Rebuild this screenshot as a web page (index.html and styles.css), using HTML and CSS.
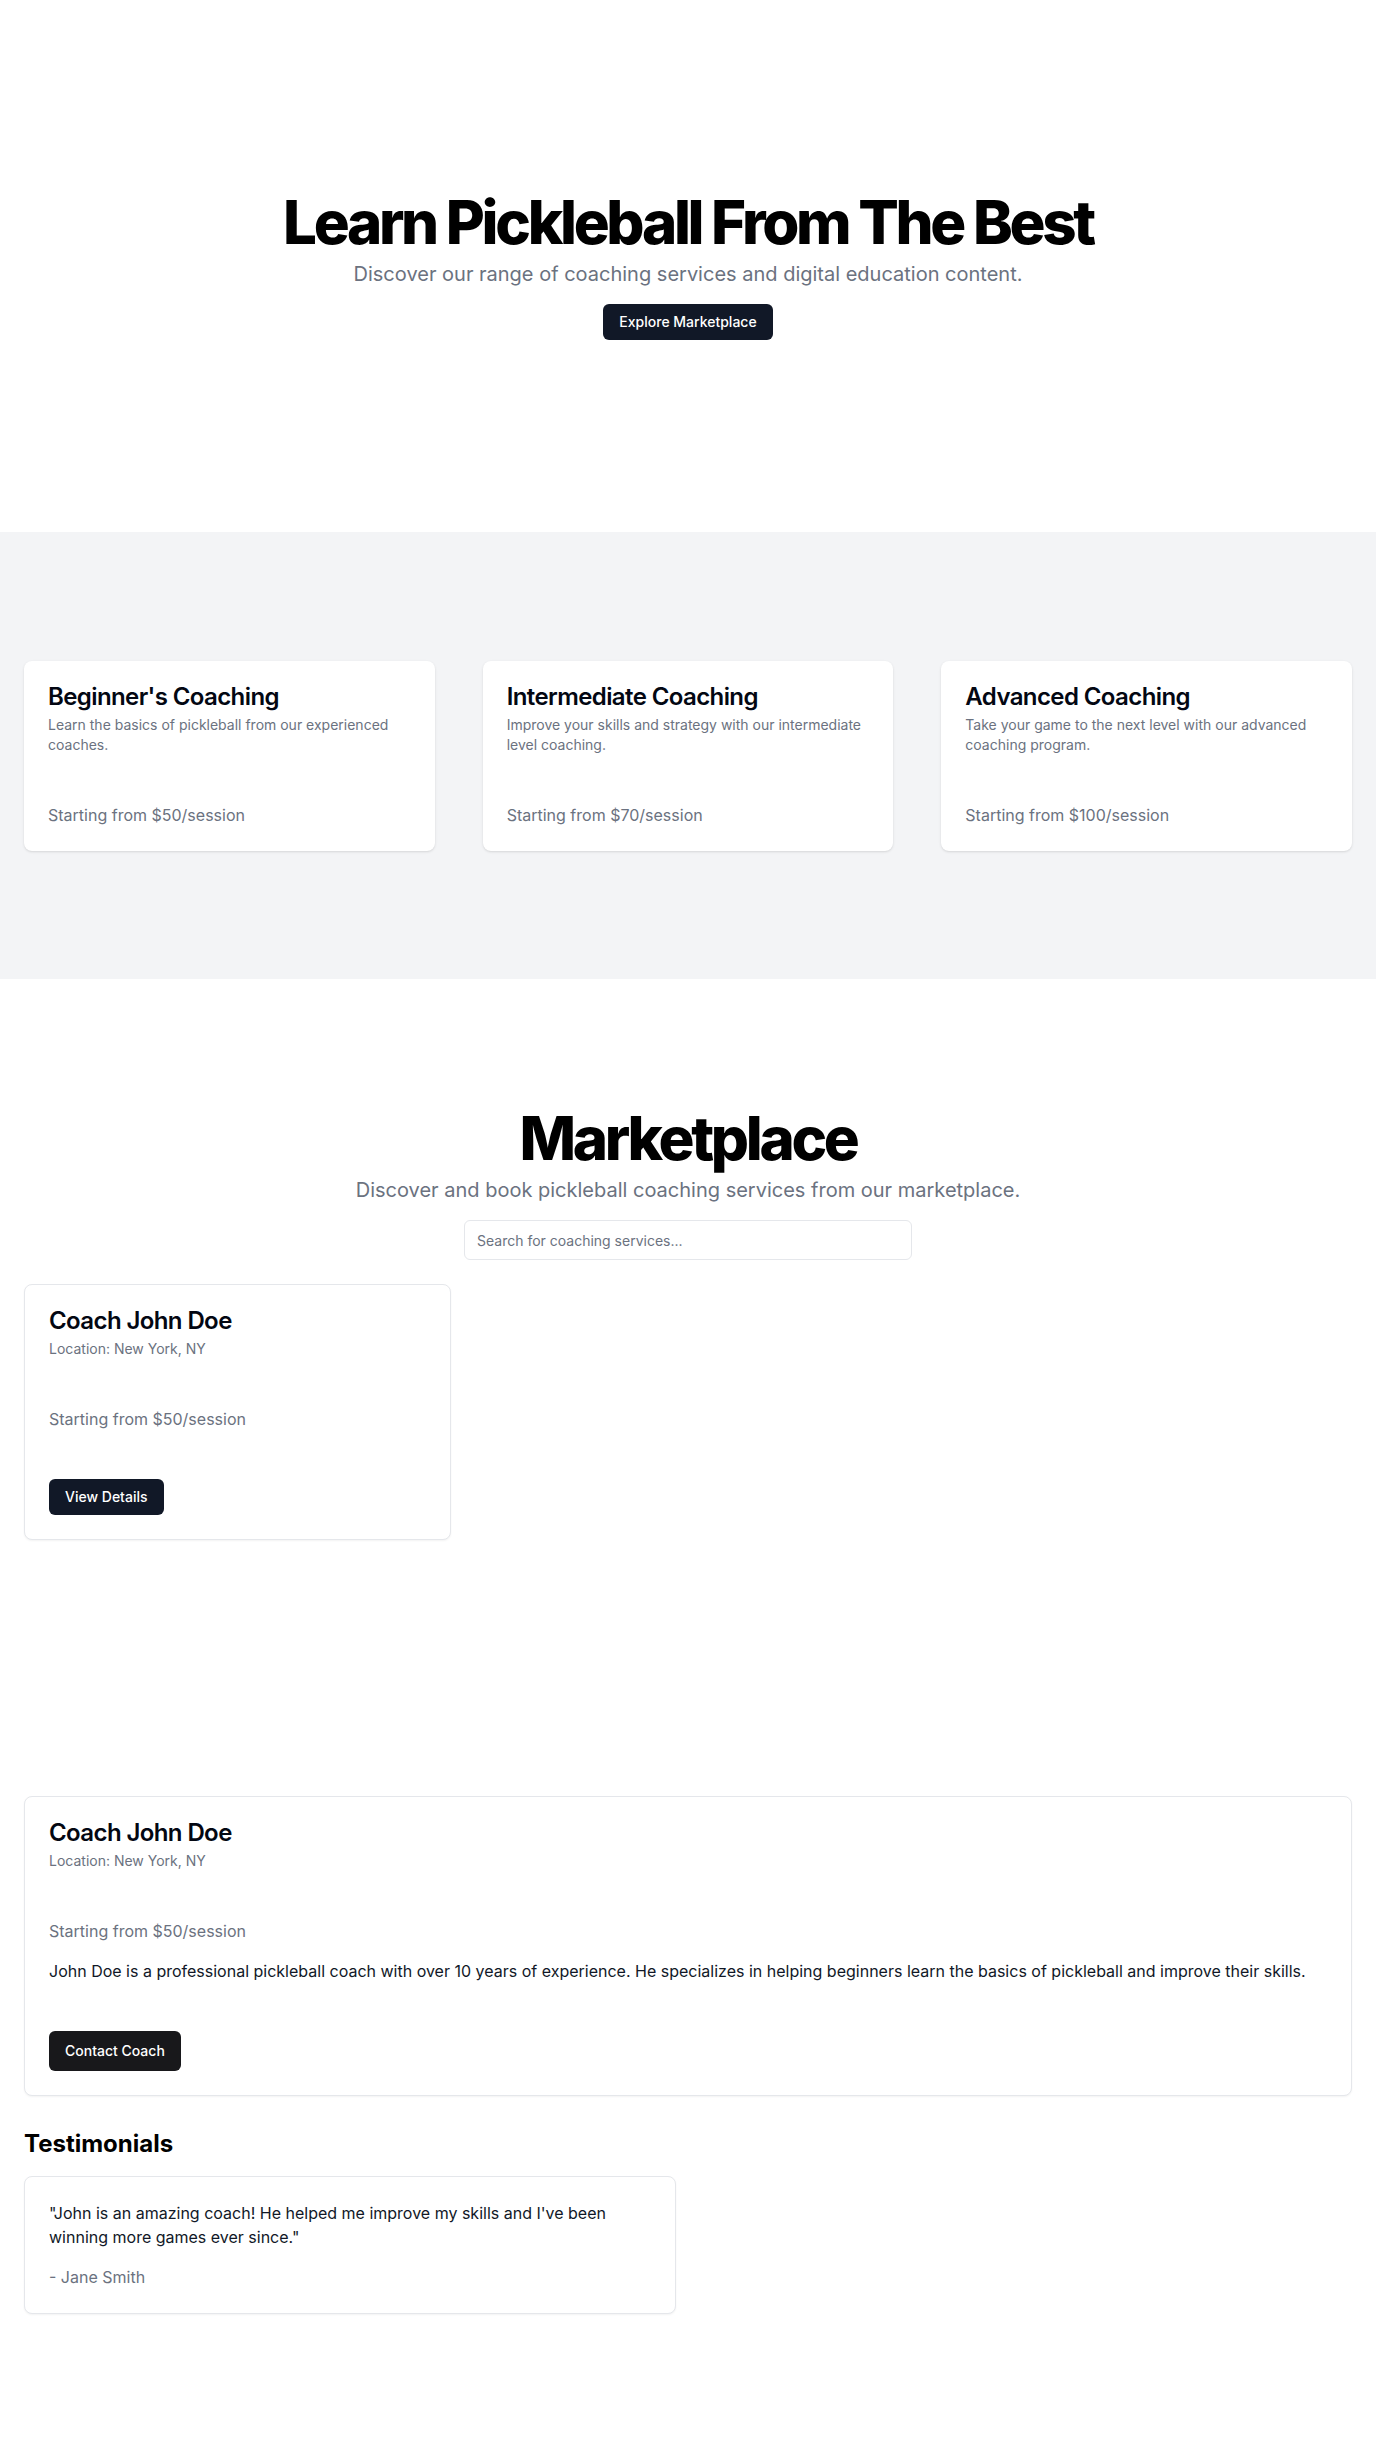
FILE: index.html
```html
<!DOCTYPE html>
<html lang="en">
<head>
<meta charset="utf-8">
<title>Learn Pickleball From The Best</title>
<link rel="stylesheet" href="styles.css">
</head>
<body>
<section class="hero">
  <h1 class="display">Learn Pickleball From The Best</h1>
  <p class="lead">Discover our range of coaching services and digital education content.</p>
  <a class="btn btn-navy" href="#marketplace">Explore Marketplace</a>
</section>

<section class="services">
  <div class="service-grid">
    <div class="card card-shadow">
      <div class="card-header">
        <h3 class="card-title">Beginner's Coaching</h3>
        <p class="card-desc">Learn the basics of pickleball from our experienced coaches.</p>
      </div>
      <div class="card-content">
        <p class="price">Starting from $50/session</p>
      </div>
    </div>
    <div class="card card-shadow">
      <div class="card-header">
        <h3 class="card-title">Intermediate Coaching</h3>
        <p class="card-desc">Improve your skills and strategy with our intermediate level coaching.</p>
      </div>
      <div class="card-content">
        <p class="price">Starting from $70/session</p>
      </div>
    </div>
    <div class="card card-shadow">
      <div class="card-header">
        <h3 class="card-title">Advanced Coaching</h3>
        <p class="card-desc">Take your game to the next level with our advanced coaching program.</p>
      </div>
      <div class="card-content">
        <p class="price">Starting from $100/session</p>
      </div>
    </div>
  </div>
</section>

<section class="market" id="marketplace">
  <h2 class="display">Marketplace</h2>
  <p class="lead">Discover and book pickleball coaching services from our marketplace.</p>
  <input class="search" type="text" placeholder="Search for coaching services...">
  <div class="coach-grid">
    <div class="card card-border">
      <div class="card-header">
        <h3 class="card-title">Coach John Doe</h3>
        <p class="card-desc">Location: New York, NY</p>
      </div>
      <div class="card-content">
        <p class="price">Starting from $50/session</p>
      </div>
      <div class="card-footer">
        <a class="btn btn-navy" href="#">View Details</a>
      </div>
    </div>
  </div>
</section>

<section class="detail">
  <div class="card card-border">
    <div class="card-header">
      <h3 class="card-title">Coach John Doe</h3>
      <p class="card-desc">Location: New York, NY</p>
    </div>
    <div class="card-content">
      <p class="price">Starting from $50/session</p>
      <p class="bio">John Doe is a professional pickleball coach with over 10 years of experience. He specializes in helping beginners learn the basics of pickleball and improve their skills.</p>
    </div>
    <div class="card-footer">
      <a class="btn btn-black" href="#">Contact Coach</a>
    </div>
  </div>

  <h2 class="section-title">Testimonials</h2>
  <div class="testimonial-grid">
    <div class="card card-border">
      <div class="card-body">
        <p class="quote">"John is an amazing coach! He helped me improve my skills and I've been winning more games ever since."</p>
        <p class="author">- Jane Smith</p>
      </div>
    </div>
  </div>
</section>
</body>
</html>
```

FILE: styles.css
```css
* {
  box-sizing: border-box;
}

html, body {
  margin: 0;
  padding: 0;
  background: #ffffff;
}

body {
  font-family: Inter, "Noto Sans", "Liberation Sans", sans-serif;
  color: #030712;
  -webkit-font-smoothing: antialiased;
}

h1, h2, h3, p {
  margin: 0;
}

/* hero */
.hero {
  padding: 192px 24px;
  display: flex;
  flex-direction: column;
  align-items: center;
  text-align: center;
}

.display {
  font-size: 60px;
  line-height: 1;
  font-weight: 800;
  letter-spacing: -0.055em;
  color: #000000;
}

.lead {
  margin-top: 8px;
  font-size: 20px;
  line-height: 28px;
  color: #6b7280;
}

/* buttons */
.btn {
  display: inline-flex;
  align-items: center;
  justify-content: center;
  height: 36px;
  padding: 0 16px;
  border-radius: 6px;
  font-size: 14px;
  line-height: 20px;
  font-weight: 500;
  color: #ffffff;
  text-decoration: none;
}

.hero .btn {
  margin-top: 16px;
}

.btn-navy {
  background: #111827;
}

.btn-black {
  background: #18181b;
  height: 40px;
}

/* services */
.services {
  background: #f3f4f6;
  padding: 129px 24px 128px;
}

.service-grid {
  display: grid;
  grid-template-columns: repeat(3, 1fr);
  gap: 48px;
}

/* cards */
.card {
  background: #ffffff;
  border-radius: 8px;
  display: flex;
  flex-direction: column;
  text-align: left;
}

.card-shadow {
  box-shadow: 0 1px 3px rgba(0, 0, 0, 0.1), 0 1px 2px -1px rgba(0, 0, 0, 0.1);
}

.card-border {
  border: 1px solid #e5e7eb;
  box-shadow: 0 1px 2px rgba(0, 0, 0, 0.05);
}

.card-header {
  padding: 24px;
  display: flex;
  flex-direction: column;
  gap: 6px;
}

.card-content {
  padding: 0 24px 24px;
}

.card-header + .card-content {
  padding-top: 24px;
}

.card-footer {
  padding: 24px;
  display: flex;
  align-items: center;
}

.card-body {
  padding: 24px;
}

.card-title {
  font-size: 24px;
  line-height: 24px;
  font-weight: 600;
  letter-spacing: -0.025em;
  color: #030712;
}

.card-desc {
  font-size: 14px;
  line-height: 20px;
  color: #6b7280;
}

.price {
  font-size: 16px;
  line-height: 24px;
  color: #6b7280;
}

/* marketplace */
.market {
  padding: 129px 24px 128px;
  display: flex;
  flex-direction: column;
  align-items: center;
  text-align: center;
}

.search {
  margin-top: 16px;
  width: 448px;
  height: 40px;
  padding: 0 12px;
  border: 1px solid #e5e7eb;
  border-radius: 6px;
  font-family: inherit;
  font-size: 14px;
  color: #111827;
  background: #ffffff;
  outline: none;
}

.search::placeholder {
  color: #6b7280;
}

.coach-grid {
  margin-top: 24px;
  width: 100%;
  display: grid;
  grid-template-columns: repeat(3, 1fr);
  gap: 24px;
}

/* detail */
.detail {
  padding: 128px 24px;
}

.bio {
  margin-top: 16px;
  font-size: 16px;
  line-height: 24px;
  color: #111827;
}

.section-title {
  margin-top: 32px;
  font-size: 24px;
  line-height: 32px;
  font-weight: 700;
  color: #000000;
}

.testimonial-grid {
  margin-top: 16px;
  display: grid;
  grid-template-columns: repeat(2, 1fr);
  gap: 24px;
}

.quote {
  font-size: 16px;
  line-height: 24px;
  color: #111827;
}

.author {
  margin-top: 16px;
  font-size: 16px;
  line-height: 24px;
  color: #6b7280;
}
```
